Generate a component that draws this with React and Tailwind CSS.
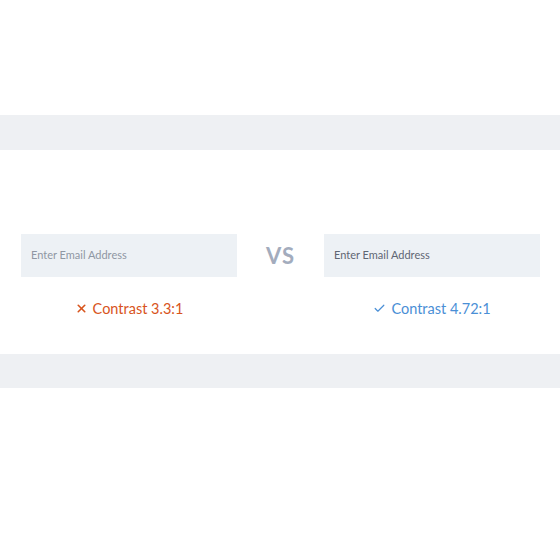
import { X, Check } from 'lucide-react';

const samples = [
  {
    key: 'bad',
    textColor: 'text-[#8f97a3]',
    label: 'Contrast 3.3:1',
    labelColor: 'text-[#d8541c]',
    Icon: X,
    stroke: 3,
  },
  {
    key: 'good',
    textColor: 'text-[#5f6673]',
    label: 'Contrast 4.72:1',
    labelColor: 'text-[#4a8fd6]',
    Icon: Check,
    stroke: 2.2,
  },
];

const Sample = ({ textColor, label, labelColor, Icon, stroke }) => (
  <div className="flex flex-col w-[216px]">
    <div className="h-[43px] bg-[#edf1f5] flex items-center pl-[10px]">
      <span className={`text-[11px] ${textColor}`}>Enter Email Address</span>
    </div>
    <div className={`mt-[21px] flex items-center justify-center gap-[5px] text-[14.5px] ${labelColor}`}>
      <Icon className="w-[13px] h-[13px]" strokeWidth={stroke} />
      <span>{label}</span>
    </div>
  </div>
);

export default function App() {
  return (
    <div className="w-[560px] h-[560px] bg-white flex flex-col" style={{ fontFamily: 'Lato, "Noto Sans", sans-serif' }}>
      <div className="h-[115px]" />
      <div className="h-[35px] bg-[#eef0f3]" />
      <div className="h-[204px] flex flex-col justify-start pt-[84px]">
        <div className="flex items-start pl-[21px]">
          <Sample {...samples[0]} />
          <div className="w-[87px] h-[43px] flex items-center justify-center">
            <span className="text-[22px] font-bold tracking-[1px] text-[#a3acbd]">VS</span>
          </div>
          <Sample {...samples[1]} />
        </div>
      </div>
      <div className="h-[34px] bg-[#eef0f3]" />
    </div>
  );
}
